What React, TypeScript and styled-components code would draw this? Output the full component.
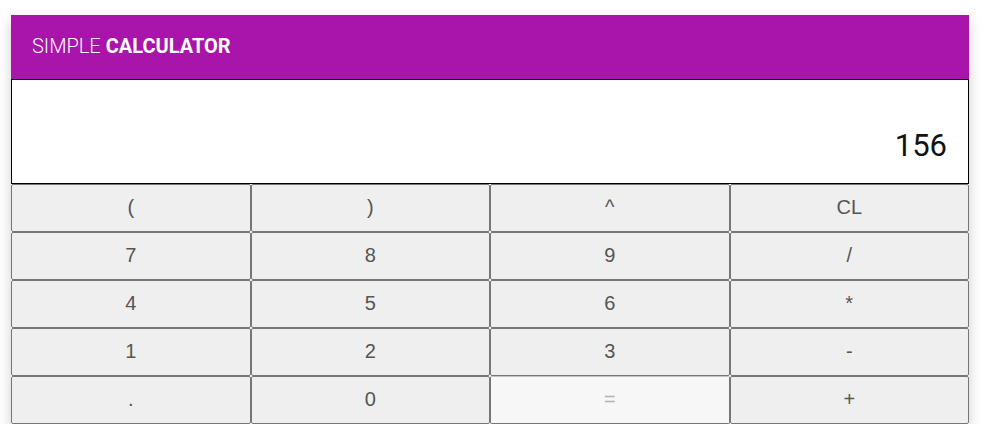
import React from "react";
import styled, { createGlobalStyle } from "styled-components";

const Global = createGlobalStyle`
  html, body { margin: 0; padding: 0; background: #ffffff; }
  body { font-family: Roboto, "Liberation Sans", Arial, sans-serif; }
  * { box-sizing: border-box; }
`;

const Page = styled.div`
  padding: 15px 0 0 11px;
`;

const Calculator = styled.div`
  width: 958px;
  background: #ffffff;
  box-shadow: 0 6px 12px rgba(0, 0, 0, 0.2);
`;

const Header = styled.header`
  height: 64px;
  background: #a914ab;
  color: #ffffff;
  display: flex;
  align-items: center;
  padding: 0 21px 2px;
  font-size: 20px;
  font-weight: 300;
`;

const Strong = styled.span`
  font-weight: 700;
  margin-left: 5px;
`;

const Display = styled.div`
  height: 105px;
  border: 1px solid #000000;
  background: #ffffff;
  display: flex;
  align-items: flex-end;
  justify-content: flex-end;
  padding: 0 21px 22px 0;
  font-size: 31px;
  font-weight: 400;
  color: #111111;
  line-height: 1;
`;

const Keys = styled.div`
  display: grid;
  grid-template-columns: repeat(4, 1fr);
  grid-auto-rows: 48px;
`;

const Key = styled.button<{ $disabled?: boolean }>`
  appearance: none;
  margin: 0;
  padding: 0 6px 2px;
  font-family: "Liberation Sans", Arial, sans-serif;
  font-size: 20px;
  font-weight: 400;
  border-radius: 2px;
  border: 1px solid #767676;
  border-top-color: ${(p) => (p.$disabled ? "#c4c4c4" : "#767676")};
  background: ${(p) => (p.$disabled ? "#f7f7f7" : "#efefef")};
  color: ${(p) => (p.$disabled ? "#b3b3b3" : "#555555")};
  cursor: pointer;
`;

const keys = [
  "(", ")", "^", "CL",
  "7", "8", "9", "/",
  "4", "5", "6", "*",
  "1", "2", "3", "-",
  ".", "0", "=", "+",
];

export default function App() {
  return (
    <Page>
      <Global />
      <Calculator>
        <Header>
          SIMPLE<Strong>CALCULATOR</Strong>
        </Header>
        <Display>156</Display>
        <Keys>
          {keys.map((k) => (
            <Key key={k} $disabled={k === "="}>
              {k}
            </Key>
          ))}
        </Keys>
      </Calculator>
    </Page>
  );
}
